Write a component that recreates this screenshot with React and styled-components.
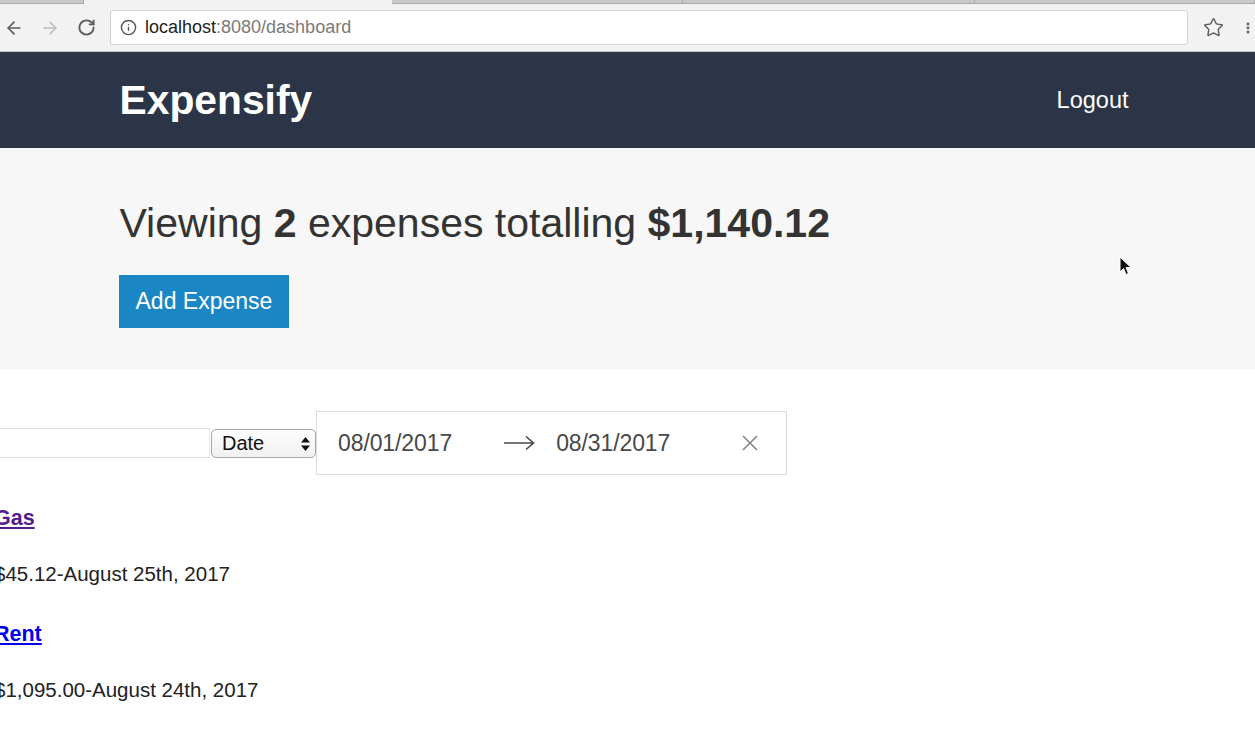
import React from "react";
import styled, { createGlobalStyle } from "styled-components";
import { ArrowLeft, ArrowRight, RotateCw, Info, Star, EllipsisVertical } from "lucide-react";

const GlobalStyle = createGlobalStyle`
  body {
    margin: 0;
    overflow: hidden;
    background: #fff;
    font-family: "Liberation Sans", Arial, sans-serif;
    color: #333;
  }
`;

const tabs = [
  { width: 84, active: false },
  { width: 308, active: true },
  { width: 291, active: false },
  { width: 292, active: false },
  { width: 280, active: false },
];

const expenses = [
  { id: 1, description: "Gas", amount: "$45.12", date: "August 25th, 2017", visited: true },
  { id: 2, description: "Rent", amount: "$1,095.00", date: "August 24th, 2017", visited: false },
];

const Browser = styled.div`
  background: #f2f2f2;
  border-bottom: 1px solid #c4c4c4;
`;

const TabStrip = styled.div`
  display: flex;
  height: 4px;
`;

const Tab = styled.div`
  flex: 0 0 ${(p) => p.width}px;
  background: ${(p) => (p.active ? "#f2f2f2" : "#c9c9c9")};
  border-right: ${(p) => (p.active ? "none" : "1px solid #a9a9a9")};
  border-bottom: ${(p) => (p.active ? "none" : "1px solid #a9a9a9")};
  box-sizing: border-box;
`;

const Toolbar = styled.div`
  display: flex;
  align-items: center;
  height: 47px;
`;

const NavButton = styled.div`
  width: ${(p) => p.size || 28}px;
  margin-left: ${(p) => p.gap || 0}px;
  display: flex;
  justify-content: center;
  align-items: center;
  color: ${(p) => (p.disabled ? "#bdbdbd" : "#5c5c5c")};
`;

const AddressBar = styled.div`
  flex: 1;
  margin-left: 10px;
  height: 35px;
  box-sizing: border-box;
  background: #fff;
  border: 1px solid #d2d2d2;
  border-radius: 3px;
  display: flex;
  align-items: center;
  padding-left: 9px;
  gap: 8px;
  font-size: 18px;
  color: #7a7a7a;
`;

const Host = styled.span`
  color: #222;
`;

const Header = styled.header`
  background: #2b3547;
  height: 96px;
  display: flex;
  align-items: center;
`;

const Container = styled.div`
  width: 1016px;
  margin: 0 auto;
  display: flex;
  align-items: center;
  justify-content: space-between;
`;

const Logo = styled.h1`
  margin: 0;
  color: #fff;
  font-size: 40.8px;
  font-weight: bold;
`;

const LogoutButton = styled.button`
  background: none;
  border: none;
  color: #fff;
  font-family: inherit;
  font-size: 23.5px;
  font-weight: 300;
  padding: 0 7px 0 0;
`;

const PageHeader = styled.section`
  background: #f7f7f7;
  padding: 51px 0 42px;
`;

const Summary = styled.div`
  width: 1016px;
  margin: 0 auto;
`;

const Title = styled.h1`
  margin: 0 0 27px;
  font-size: 41px;
  font-weight: 300;
  line-height: 49px;
  color: #333;
  span {
    font-weight: bold;
  }
`;

const PrimaryButton = styled.button`
  background: #1a86c4;
  border: none;
  color: #fff;
  font-family: inherit;
  font-size: 23px;
  font-weight: 300;
  height: 53px;
  padding: 0 17px;
  margin-left: -1px;
`;

const Content = styled.div`
  margin-left: -6px;
`;

const Filters = styled.div`
  display: flex;
  align-items: center;
  margin-top: 41px;
  padding-left: 3px;
`;

const TextInput = styled.input`
  width: 213px;
  height: 30px;
  box-sizing: border-box;
  border: 1px solid #dcdcdc;
  border-right-color: #e6e6e6;
  background: #fff;
  outline: none;
`;

const SelectWrap = styled.div`
  position: relative;
  margin-left: 1px;
`;

const Select = styled.select`
  appearance: none;
  width: 105px;
  height: 29px;
  box-sizing: border-box;
  border: 1px solid #a8a8a8;
  border-radius: 5px;
  background: linear-gradient(#fdfdfd, #f1f1f1);
  font-family: inherit;
  font-size: 20px;
  color: #111;
  padding: 0 0 0 10px;
`;

const SelectArrows = styled.svg`
  position: absolute;
  right: 6px;
  top: 8px;
  pointer-events: none;
`;

const DateRange = styled.div`
  display: flex;
  align-items: center;
  width: 471px;
  height: 64px;
  box-sizing: border-box;
  border: 1px solid #dbdbdb;
  background: #fff;
  padding-left: 21px;
  font-size: 23px;
  font-weight: 300;
  color: #484848;
`;

const DateText = styled.span`
  letter-spacing: -0.1px;
`;

const RangeArrow = styled.svg`
  margin: 0 21px 0 52px;
`;

const ClearButton = styled.svg`
  margin-left: 72px;
`;

const List = styled.div`
  margin-top: 31px;
  display: flex;
  flex-direction: column;
  gap: 36px;
`;

const Item = styled.div``;

const ItemLink = styled.a`
  display: block;
  margin: 0 0 32px;
  font-size: 21.5px;
  font-weight: bold;
  line-height: 24px;
  color: ${(p) => (p.visited ? "#551a8b" : "#0000ee")};
  text-decoration: underline;
`;

const ItemMeta = styled.p`
  margin: 0;
  font-size: 20.5px;
  line-height: 24px;
  color: #222;
`;

const Cursor = styled.svg`
  position: absolute;
  left: 1119px;
  top: 256px;
`;

export default function App() {
  return (
    <>
      <GlobalStyle />
      <Browser>
        <TabStrip>
          {tabs.map((t, i) => (
            <Tab key={i} width={t.width} active={t.active} />
          ))}
        </TabStrip>
        <Toolbar>
          <NavButton>
            <ArrowLeft size={20} strokeWidth={2} />
          </NavButton>
          <NavButton gap={8} disabled>
            <ArrowRight size={20} strokeWidth={2} />
          </NavButton>
          <NavButton gap={8}>
            <RotateCw size={19} strokeWidth={2.4} />
          </NavButton>
          <AddressBar>
            <Info size={17} color="#555" strokeWidth={2} />
            <span>
              <Host>localhost</Host>:8080/dashboard
            </span>
          </AddressBar>
          <NavButton gap={11}>
            <Star size={21} strokeWidth={1.6} color="#5c5c5c" />
          </NavButton>
          <NavButton gap={14} size={14}>
            <EllipsisVertical size={20} strokeWidth={3} color="#5c5c5c" />
          </NavButton>
        </Toolbar>
      </Browser>

      <Header>
        <Container>
          <Logo>Expensify</Logo>
          <LogoutButton>Logout</LogoutButton>
        </Container>
      </Header>

      <PageHeader>
        <Summary>
          <Title>
            Viewing <span>2</span> expenses totalling <span>$1,140.12</span>
          </Title>
          <PrimaryButton>Add Expense</PrimaryButton>
        </Summary>
      </PageHeader>

      <Content>
        <Filters>
          <TextInput type="text" defaultValue="" />
          <SelectWrap>
            <Select defaultValue="date">
              <option value="date">Date</option>
              <option value="amount">Amount</option>
            </Select>
            <SelectArrows width="9" height="14" viewBox="0 0 9 14">
              <path d="M4.5 0 L9 5.5 L0 5.5 Z" fill="#111" />
              <path d="M4.5 14 L9 8.5 L0 8.5 Z" fill="#111" />
            </SelectArrows>
          </SelectWrap>
          <DateRange>
            <DateText>08/01/2017</DateText>
            <RangeArrow width="31" height="16" viewBox="0 0 31 16">
              <path d="M0 8 H29 M22 1.5 L29.5 8 L22 14.5" fill="none" stroke="#484848" strokeWidth="1.6" />
            </RangeArrow>
            <DateText>08/31/2017</DateText>
            <ClearButton width="16" height="16" viewBox="0 0 16 16">
              <path d="M1 1 L15 15 M15 1 L1 15" stroke="#858585" strokeWidth="1.6" />
            </ClearButton>
          </DateRange>
        </Filters>

        <List>
          {expenses.map((e) => (
            <Item key={e.id}>
              <ItemLink href="#" visited={e.visited}>
                {e.description}
              </ItemLink>
              <ItemMeta>
                {e.amount}-{e.date}
              </ItemMeta>
            </Item>
          ))}
        </List>
      </Content>

      <Cursor width="13" height="20" viewBox="0 0 13 20">
        <path d="M1 1 L1 16 L4.5 12.5 L7 18.5 L9.5 17.5 L7 11.5 L12 11.5 Z" fill="#111" stroke="#fff" strokeWidth="1" />
      </Cursor>
    </>
  );
}
